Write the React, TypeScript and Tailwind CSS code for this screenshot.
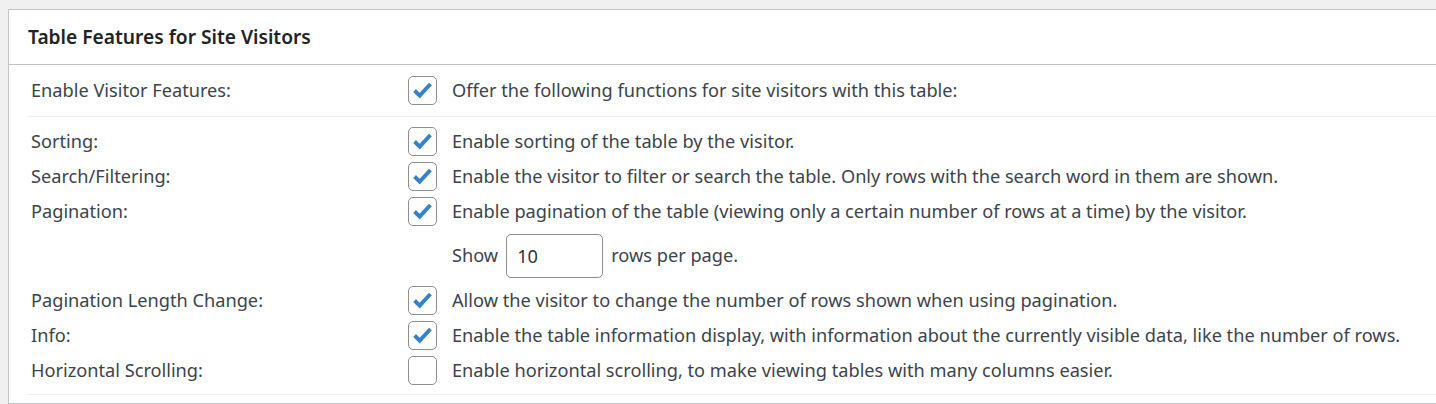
import { useState } from "react";

type Feature = {
  id: string;
  label: string;
  text: string;
  checked: boolean;
};

const features: Feature[] = [
  { id: "sorting", label: "Sorting:", text: "Enable sorting of the table by the visitor.", checked: true },
  {
    id: "search",
    label: "Search/Filtering:",
    text: "Enable the visitor to filter or search the table. Only rows with the search word in them are shown.",
    checked: true,
  },
  {
    id: "pagination",
    label: "Pagination:",
    text: "Enable pagination of the table (viewing only a certain number of rows at a time) by the visitor.",
    checked: true,
  },
  {
    id: "length",
    label: "Pagination Length Change:",
    text: "Allow the visitor to change the number of rows shown when using pagination.",
    checked: true,
  },
  {
    id: "info",
    label: "Info:",
    text: "Enable the table information display, with information about the currently visible data, like the number of rows.",
    checked: true,
  },
  {
    id: "scroll",
    label: "Horizontal Scrolling:",
    text: "Enable horizontal scrolling, to make viewing tables with many columns easier.",
    checked: false,
  },
];

const Checkbox = ({ checked, onChange }: { checked: boolean; onChange: () => void }) => (
  <button
    type="button"
    onClick={onChange}
    className="flex items-center justify-center w-[29px] h-[29px] shrink-0 border border-[#8c8f94] rounded-[5px] bg-white"
  >
    {checked && (
      <svg viewBox="0 0 29 29" className="w-[29px] h-[29px]">
        <path d="M6 14.5l5.5 5.5L23 7.5" fill="none" stroke="#3582c4" strokeWidth="4.2" />
      </svg>
    )}
  </button>
);

export default function App() {
  const [enabled, setEnabled] = useState(true);
  const [state, setState] = useState<Record<string, boolean>>(
    Object.fromEntries(features.map(f => [f.id, f.checked])),
  );
  const [rows, setRows] = useState("10");

  return (
    <div className="min-h-[404px] bg-[#f0f0f1] pt-[9px] pl-[8px] font-['Noto_Sans',sans-serif] text-[18.2px] text-[#3c434a]">
      <div className="bg-white border border-[#c3c4c7] border-r-0">
        <div className="h-[55px] flex items-center px-[19px] border-b border-[#c3c4c7]">
          <h2 className="text-[19.2px] font-semibold text-[#1d2327]">Table Features for Site Visitors</h2>
        </div>
        <div className="pl-[18px] pb-[8px]">
          <div className="flex items-center h-[52px] border-b border-[#f0f0f1]">
            <div className="w-[381px] pl-[4px] shrink-0">Enable Visitor Features:</div>
            <Checkbox checked={enabled} onChange={() => setEnabled(v => !v)} />
            <span className="ml-[15px]">Offer the following functions for site visitors with this table:</span>
          </div>
          <div className="pt-[10px] pb-[9px] border-b border-[#f0f0f1] flex flex-col gap-[6px]">
            {features.map(f => (
              <div key={f.id}>
                <div className="flex items-center h-[29px]">
                  <div className="w-[381px] pl-[4px] shrink-0">{f.label}</div>
                  <Checkbox checked={state[f.id]} onChange={() => setState(s => ({ ...s, [f.id]: !s[f.id] }))} />
                  <span className="ml-[15px]">{f.text}</span>
                </div>
                {f.id === "pagination" && (
                  <div className="flex items-center gap-[8px] pl-[425px] mt-[8px] mb-[2px]">
                    <span>Show</span>
                    <input
                      value={rows}
                      onChange={e => setRows(e.target.value)}
                      className="w-[97px] h-[44px] px-[10px] border border-[#8c8f94] rounded-[5px] text-[#2c3338] outline-none"
                    />
                    <span>rows per page.</span>
                  </div>
                )}
              </div>
            ))}
          </div>
        </div>
      </div>
    </div>
  );
}
